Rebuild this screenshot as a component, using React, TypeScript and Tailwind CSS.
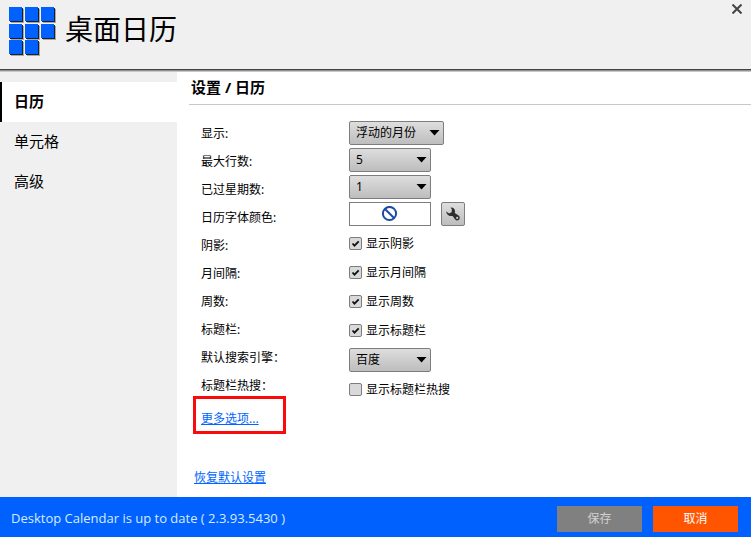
import { useState } from 'react'

const fontStack = "font-['Noto_Sans','Noto_Sans_CJK_SC',sans-serif]"

const tabs = ['日历', '单元格', '高级']

const labels = [
  { id: 'display', text: '显示:' },
  { id: 'rows', text: '最大行数:' },
  { id: 'weeks', text: '已过星期数:' },
  { id: 'fontColor', text: '日历字体颜色:' },
  { id: 'shadow', text: '阴影:' },
  { id: 'monthGap', text: '月间隔:' },
  { id: 'weekNumber', text: '周数:' },
  { id: 'titleBar', text: '标题栏:' },
  { id: 'engine', text: '默认搜索引擎：' },
  { id: 'hotSearch', text: '标题栏热搜：' },
]

const checks = [
  { id: 'shadow', text: '显示阴影' },
  { id: 'monthGap', text: '显示月间隔' },
  { id: 'weekNumber', text: '显示周数' },
  { id: 'titleBar', text: '显示标题栏' },
]

function Logo() {
  const cells = [0, 1, 2, 3, 4, 5, 6, 7]
  return (
    <svg width="48" height="49" viewBox="0 0 48 49" shapeRendering="crispEdges" aria-hidden="true">
      {cells.map(i => {
        const x = (i % 3) * 16
        const y = Math.floor(i / 3) * 17 - (i > 5 ? 1 : 0)
        return (
          <g key={i}>
            <rect x={x + 2} y={y + 2} width="13" height="14" fill="#a8a8a8" />
            <rect x={x + 1} y={y + 1} width="13" height="14" fill="#1a1f2b" />
            <rect x={x} y={y} width="13" height="14" fill="#0061ff" />
          </g>
        )
      })}
    </svg>
  )
}

type SelectProps = {
  id: string
  options: string[]
  wide?: boolean
}

function Select({ id, options, wide }: SelectProps) {
  return (
    <div className={wide ? 'relative w-[95px]' : 'relative w-[82px]'}>
      <select
        id={id}
        className="block h-6 w-full appearance-none rounded-xs border border-[#7d7d7d] bg-linear-to-b from-[#dedede] to-[#bdbdbd] pl-1.5 text-xs text-black"
      >
        {options.map(o => (
          <option key={o}>{o}</option>
        ))}
      </select>
      <svg className="pointer-events-none absolute top-2 right-1" width="11" height="7" viewBox="0 0 11 7" aria-hidden="true">
        <path d="M0.5 1h10L5.5 6.5z" fill="#000" />
      </svg>
    </div>
  )
}

type CheckProps = {
  id: string
  text: string
  checked: boolean
  onChange: () => void
}

function Check({ id, text, checked, onChange }: CheckProps) {
  return (
    <label className="flex h-[29px] items-center gap-1">
      <span className="relative block size-[13px]">
        <input
          id={id}
          type="checkbox"
          checked={checked}
          onChange={onChange}
          className="block size-[13px] appearance-none rounded-xs border border-[#7d7d7d] bg-[#d9d9d9]"
        />
        {checked && (
          <svg className="pointer-events-none absolute inset-0" width="13" height="13" viewBox="0 0 13 13" aria-hidden="true">
            <path d="M3.5 6.5l2 2.2 4.2-4.4" fill="none" stroke="#111" strokeWidth="1.8" />
          </svg>
        )}
      </span>
      {text}
    </label>
  )
}

function App() {
  const [active, setActive] = useState<string>('日历')
  const [values, setValues] = useState<Record<string, boolean>>({
    shadow: true,
    monthGap: true,
    weekNumber: true,
    titleBar: true,
    hotSearch: false,
  })

  const toggle = (id: string) => setValues({ ...values, [id]: !values[id] })

  return (
    <div className={`flex min-h-screen flex-col bg-white text-xs text-black ${fontStack}`}>
      <header className="border-b border-[#c8c8c8] bg-[#f0f0f0]">
        <div className="border-b border-[#8f8f8f]">
          <div className="flex h-[70px] items-start justify-between border-b border-[#444] pl-[9px]">
            <div className="flex items-start gap-2 pt-[7px]">
              <Logo />
              <h1 className="text-[28px] leading-[44px]">桌面日历</h1>
            </div>
            <button aria-label="关闭" className="mt-1 mr-[9px]">
              <svg width="10" height="10" viewBox="0 0 10 10" aria-hidden="true">
                <path d="M0.5 0.5l9 9M9.5 0.5l-9 9" stroke="#444" strokeWidth="2" />
              </svg>
            </button>
          </div>
        </div>
      </header>

      <div className="flex flex-1">
        <nav className="w-[177px] shrink-0 bg-[#f0f0f0] pt-2.5">
          {tabs.map(tab => (
            <button
              key={tab}
              onClick={() => setActive(tab)}
              className={
                tab === active
                  ? 'block h-10 w-full border-l-2 border-black bg-white pb-0.5 pl-3 text-left text-[15px] font-bold'
                  : 'block h-10 w-full border-l-2 border-transparent pb-0.5 pl-3 text-left text-[15px]'
              }
            >
              {tab}
            </button>
          ))}
        </nav>

        <main className="flex-1 pl-3">
          <h2 className="h-[33px] border-b border-[#c8c8c8] pl-0.5 text-[15px] leading-[30px] font-bold">设置 / 日历</h2>
          <div className="flex pt-[15px] pl-1">
            <div className="w-[156px]">
              <div className="pl-2">
                {labels.map(l => (
                  <label key={l.id} htmlFor={l.id} className="block h-7 leading-7">
                    {l.text}
                  </label>
                ))}
              </div>
              <div className="-mt-1 flex h-[38px] w-[93px] items-center border-3 border-[#fa0a0a] pt-2 pl-[5px]">
                <a href="#more" className="text-[#0066ff] underline">
                  更多选项...
                </a>
              </div>
              <a href="#reset" className="mt-[34px] block pl-px leading-5 text-[#0066ff] underline">
                恢复默认设置
              </a>
            </div>

            <div className="flex flex-col gap-[3px] pt-px">
              <Select id="display" options={['浮动的月份', '固定的月份']} wide />
              <Select id="rows" options={['5', '6', '7']} />
              <Select id="weeks" options={['1', '2', '3']} />
              <div className="flex gap-2.5">
                <button
                  id="fontColor"
                  aria-label="日历字体颜色"
                  className="flex h-6 w-[82px] items-center justify-center border border-[#7d7d7d] bg-white"
                >
                  <svg width="16" height="16" viewBox="0 0 16 16" aria-hidden="true">
                    <circle cx="7.5" cy="7.5" r="6.6" fill="none" stroke="#1c4da1" strokeWidth="2" />
                    <path d="M3 3l9 9" stroke="#1c4da1" strokeWidth="2" />
                  </svg>
                </button>
                <button
                  aria-label="设置颜色"
                  className="flex size-6 items-center justify-center rounded-xs border border-[#7d7d7d] bg-linear-to-b from-[#dedede] to-[#bdbdbd]"
                >
                  <svg width="14" height="14" viewBox="0 0 14 14" aria-hidden="true">
                    <path
                      d="M4.6 0.5C7.2 0.2 9.2 2.1 9 4.6L8.8 6L12.6 8.6C13.9 9.6 14.1 11.4 13.1 12.6C12 13.8 10.2 13.8 9.2 12.6L6.6 8.9C3.5 9.8 0.3 7.8 0.3 4.6L3 6.4L5.6 5.2L5.9 2.6Z"
                      fill="#2f2f2f"
                    />
                    <circle cx="11.2" cy="10.9" r="1.1" fill="#ccc" />
                  </svg>
                </button>
              </div>
              <div>
                {checks.map(c => (
                  <Check key={c.id} id={c.id} text={c.text} checked={values[c.id]} onChange={() => toggle(c.id)} />
                ))}
              </div>
              <Select id="engine" options={['百度', '必应', '谷歌']} />
              <Check id="hotSearch" text="显示标题栏热搜" checked={values.hotSearch} onChange={() => toggle('hotSearch')} />
            </div>
          </div>
        </main>
      </div>

      <footer className="flex h-10 items-center justify-between bg-[#0061ff] pt-1 pr-[13px] pl-[11px] text-white">
        <p className="font-['Open_Sans',sans-serif] text-[13px] text-[#d5ecff]">Desktop Calendar is up to date ( 2.3.93.5430 )</p>
        <div className="flex gap-[11px]">
          <button className="h-[26px] w-[85px] bg-[#808080] text-[#d0d0d0]">保存</button>
          <button className="h-[26px] w-[85px] bg-[#ff5500]">取消</button>
        </div>
      </footer>
    </div>
  )
}

export default App
